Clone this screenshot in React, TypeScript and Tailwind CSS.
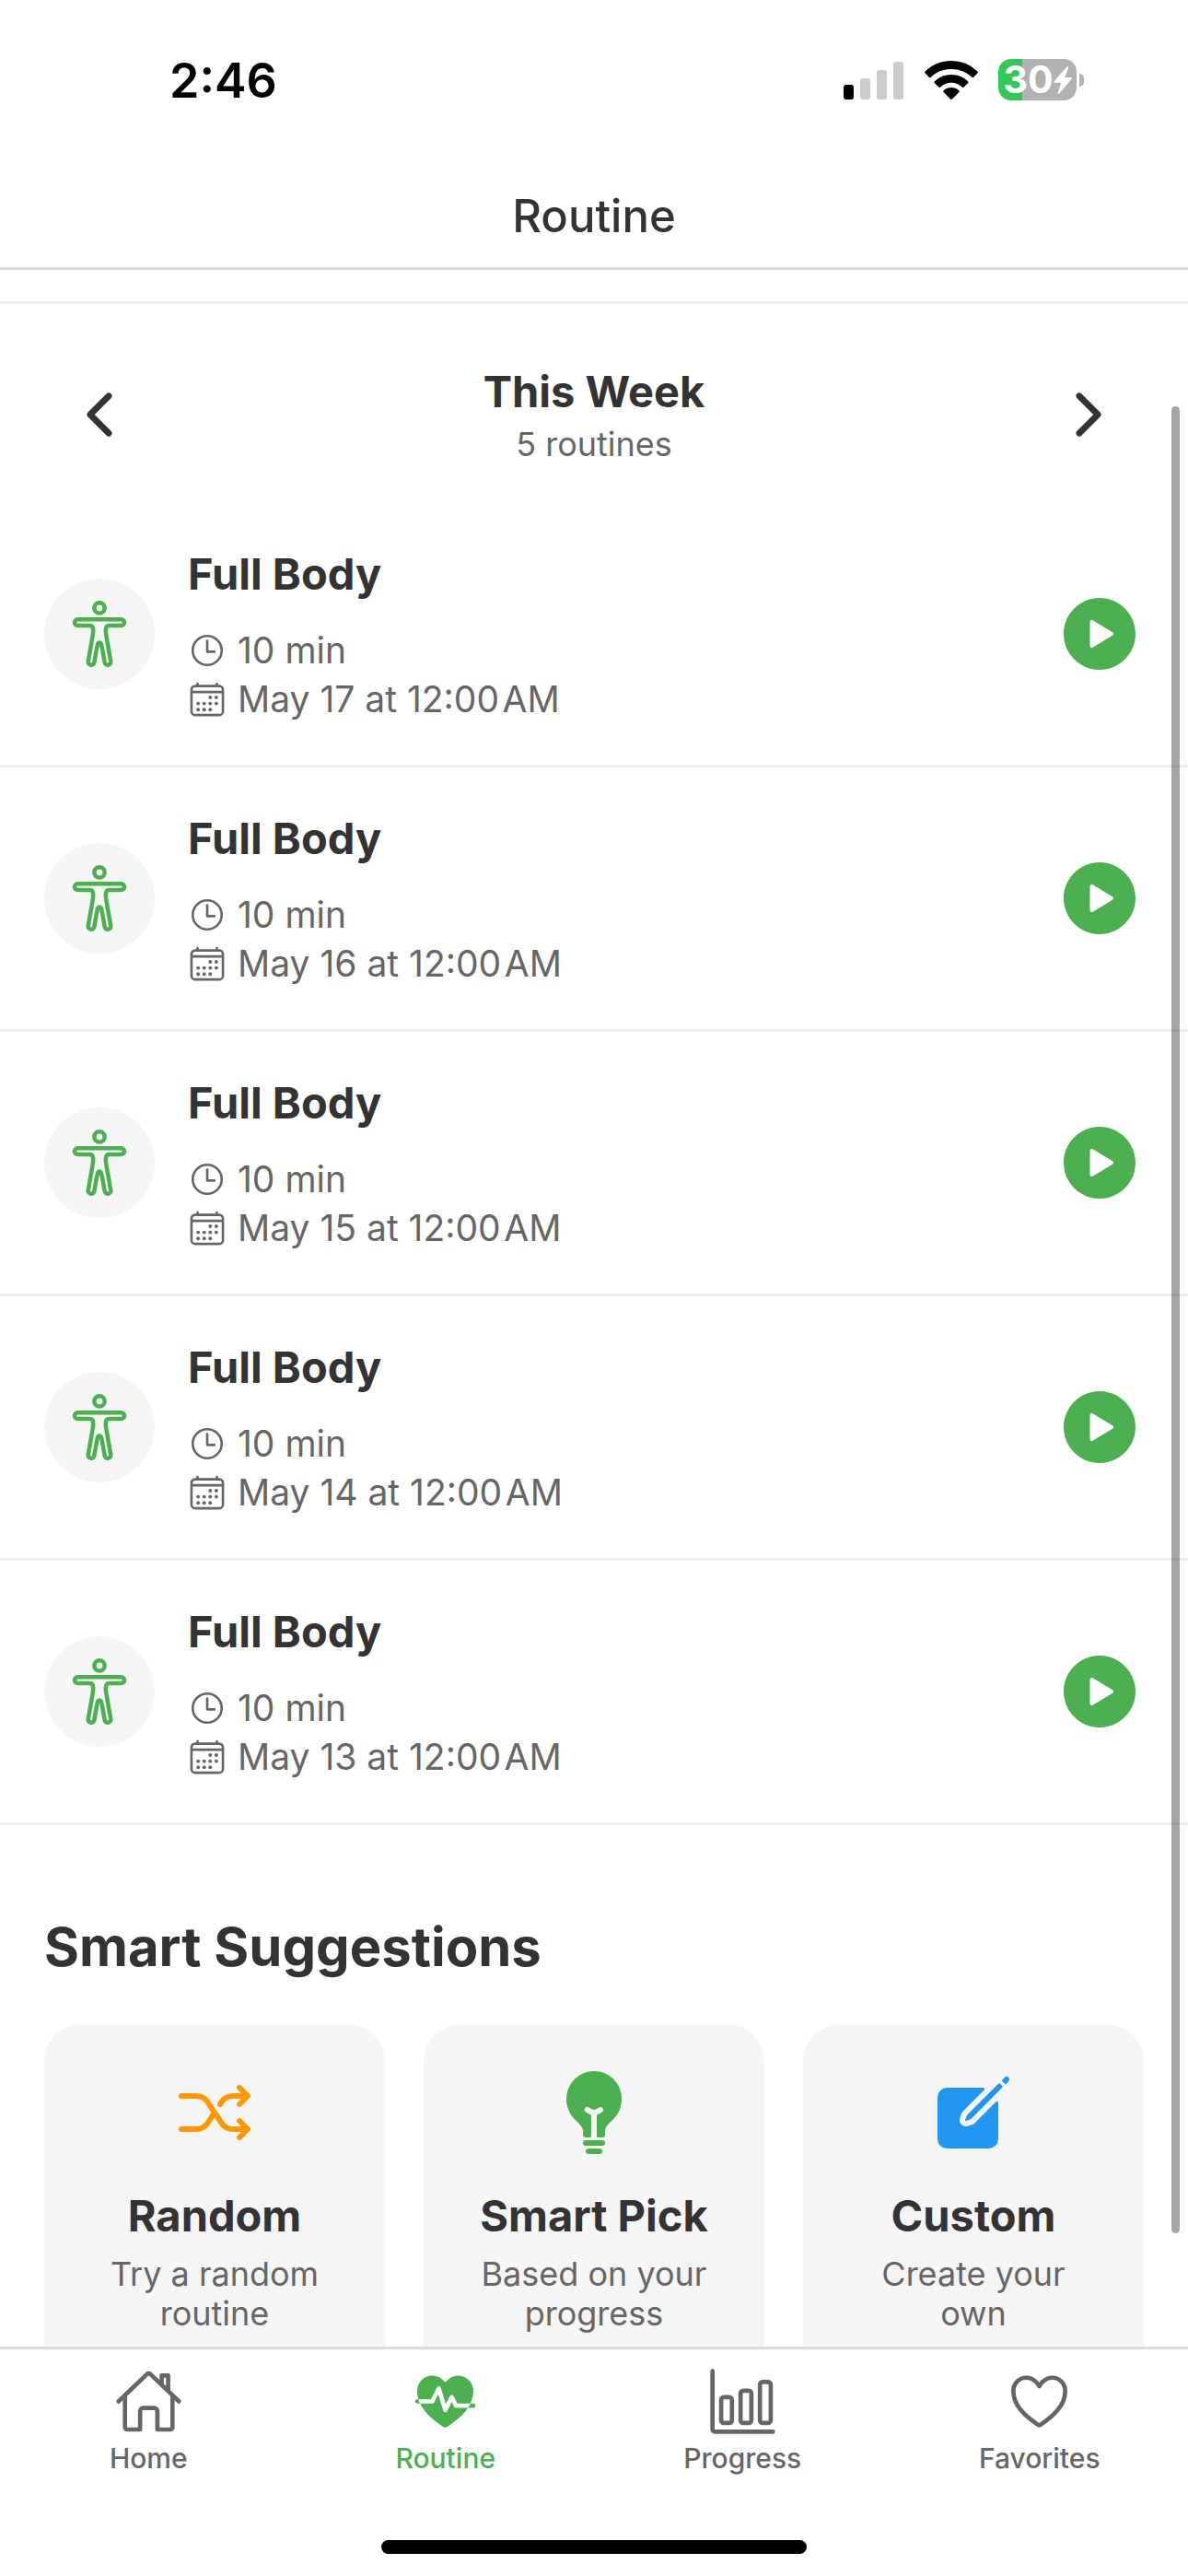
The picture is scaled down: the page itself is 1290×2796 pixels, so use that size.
import type { IconType } from 'react-icons'
import {
  IoBarChartOutline,
  IoBodyOutline,
  IoBulb,
  IoCalendarOutline,
  IoChevronBack,
  IoChevronForward,
  IoCreate,
  IoFitness,
  IoHeartOutline,
  IoHomeOutline,
  IoPlayCircle,
  IoShuffle,
  IoTimeOutline,
} from 'react-icons/io5'

const routines = [
  { id: 1, name: 'Full Body', duration: '10 min', date: 'May 17 at 12:00\u200aAM' },
  { id: 2, name: 'Full Body', duration: '10 min', date: 'May 16 at 12:00\u200aAM' },
  { id: 3, name: 'Full Body', duration: '10 min', date: 'May 15 at 12:00\u200aAM' },
  { id: 4, name: 'Full Body', duration: '10 min', date: 'May 14 at 12:00\u200aAM' },
  { id: 5, name: 'Full Body', duration: '10 min', date: 'May 13 at 12:00\u200aAM' },
]

const suggestions: { title: string; text: string; icon: IconType; color: string }[] = [
  { title: 'Random', text: 'Try a random routine', icon: IoShuffle, color: 'text-[#ff9800]' },
  { title: 'Smart Pick', text: 'Based on your progress', icon: IoBulb, color: 'text-[#4caf50]' },
  { title: 'Custom', text: 'Create your own', icon: IoCreate, color: 'text-[#2196f3]' },
]

const tabs: { label: string; icon: IconType; active?: boolean }[] = [
  { label: 'Home', icon: IoHomeOutline },
  { label: 'Routine', icon: IoFitness, active: true },
  { label: 'Progress', icon: IoBarChartOutline },
  { label: 'Favorites', icon: IoHeartOutline },
]

function StatusBar() {
  return (
    <div className="flex h-[177px] shrink-0 items-start justify-between pt-[54px] pr-[113px] pl-[184px]">
      <span className="text-[52px] leading-[68px] font-semibold text-black">2:46</span>
      <div className="flex items-center pt-[10px]">
        <svg width="66" height="42" viewBox="0 0 66 42" aria-label="Signal">
          <rect x="0" y="26" width="11" height="16" rx="3" fill="#000" />
          <rect x="18" y="19" width="11" height="23" rx="3" fill="#ccc" />
          <rect x="36" y="10" width="11" height="32" rx="3" fill="#ccc" />
          <rect x="54" y="1" width="11" height="41" rx="3" fill="#ccc" />
        </svg>
        <svg className="ml-[22px]" width="58" height="42" viewBox="0 0 58 42" aria-label="Wi-Fi">
          <path d="M29 0C18 0 8 4.300 .6 11.400a1.400 1.400 0 0 0 0 2l4.200 4.300a1.400 1.400 0 0 0 2 0A32 32 0 0 1 29 9a32 32 0 0 1 22.200 8.700 1.400 1.400 0 0 0 2 0l4.200-4.300a1.400 1.400 0 0 0 0-2A41 41 0 0 0 29 0Z" />
          <path d="M29 15a26 26 0 0 0-18 7.200 1.400 1.400 0 0 0 0 2l4.300 4.200a1.400 1.400 0 0 0 2 0 17 17 0 0 1 23.400 0 1.400 1.400 0 0 0 2 0l4.300-4.200a1.400 1.400 0 0 0 0-2A26 26 0 0 0 29 15Z" />
          <path d="M29 29a12 12 0 0 0-8.200 3.200 1.300 1.300 0 0 0 0 2l7.200 7.300a1.400 1.400 0 0 0 2 0l7.200-7.300a1.300 1.300 0 0 0 0-2A12 12 0 0 0 29 29Z" />
        </svg>
        <div className="ml-[22px] flex h-[45px] w-[85px] items-center justify-center rounded-[14px] bg-linear-to-r from-[#34c759] from-31% to-[#b2b2b2] to-31%">
          <span className="text-[41px] leading-[45px] font-bold text-white">30</span>
          <svg width="20" height="30" viewBox="0 0 20 30" fill="#fff" aria-label="Charging">
            <path d="M14.600.6 1 15.800c-.9 1-.4 2 .8 2h6.400L4.800 28.200c-.5 1.500.8 2.200 1.800 1L19.300 14c.9-1 .4-2-.8-2h-6.300l4-10.300C16.700.3 15.500-.4 14.600.6Z" />
          </svg>
        </div>
        <div className="ml-[3px] h-[14px] w-[5px] rounded-r-full bg-[#b2b2b2]" />
      </div>
    </div>
  )
}

function RoutineRow({ name, duration, date }: { name: string; duration: string; date: string }) {
  return (
    <li className="flex items-center border-b-[3px] border-[#eee] px-12 py-[45px]">
      <div className="flex size-[120px] items-center justify-center rounded-full bg-[#f5f5f5] text-[#4caf50]">
        <IoBodyOutline className="size-[72px]" />
      </div>
      <div className="ml-9 flex-1">
        <h3 className="mb-6 text-[47px] leading-[64px] font-bold text-[#333]">{name}</h3>
        <div className="flex items-center gap-3 text-[39px] leading-[53px] text-[#666]">
          <IoTimeOutline className="size-[42px]" />
          <span>{duration}</span>
        </div>
        <div className="flex items-center gap-3 text-[39px] leading-[53px] text-[#666]">
          <IoCalendarOutline className="size-[42px]" />
          <span>{date}</span>
        </div>
      </div>
      <button type="button" aria-label={`Start ${name}`} className="text-[#4caf50]">
        <IoPlayCircle className="size-24" />
      </button>
    </li>
  )
}

export default function App() {
  return (
    <div className="flex h-screen flex-col overflow-hidden bg-white font-['Inter',sans-serif]">
      <StatusBar />
      <header className="shrink-0 border-b-[3px] border-[#ddd] pt-[26px] pb-[23px] text-center">
        <h1 className="text-[49px] leading-[64px] font-medium text-[#333]">Routine</h1>
      </header>

      <main className="relative min-h-0 flex-1 overflow-hidden">
        <div className="mt-[34px] border-t-[3px] border-[#eee]" />
        <div className="flex items-center justify-between px-[72px] pt-[63px] pb-[39px]">
          <button type="button" aria-label="Previous week" className="text-[#333]">
            <IoChevronBack className="size-[72px]" />
          </button>
          <div className="text-center">
            <h2 className="text-[47px] leading-[64px] font-bold text-[#333]">This Week</h2>
            <p className="text-[36px] leading-[50px] text-[#666]">5 routines</p>
          </div>
          <button type="button" aria-label="Next week" className="text-[#333]">
            <IoChevronForward className="size-[72px]" />
          </button>
        </div>

        <ul>
          {routines.map((routine) => (
            <RoutineRow key={routine.id} name={routine.name} duration={routine.duration} date={routine.date} />
          ))}
        </ul>

        <section className="px-12 pt-[94px]">
          <h2 className="mb-[46px] text-[58px] leading-[76px] font-bold text-[#333]">Smart Suggestions</h2>
          <div className="grid grid-cols-3 gap-[42px]">
            {suggestions.map(({ title, text, icon: Icon, color }) => (
              <button
                key={title}
                type="button"
                className="flex flex-col items-center rounded-[40px] bg-[#f5f5f5] px-12 py-12"
              >
                <Icon className={`size-24 ${color}`} />
                <span className="mt-8 text-[47px] leading-[64px] font-bold text-[#333]">{title}</span>
                <span className="mt-[10px] text-[36px] leading-[43px] text-[#666]">{text}</span>
              </button>
            ))}
          </div>
        </section>

        <div className="absolute top-[148px] right-[9px] bottom-[123px] w-[9px] rounded-full bg-black/35" />
      </main>

      <nav className="shrink-0 border-t-[3px] border-[#ddd] pt-[19px] pb-6">
        <div className="grid grid-cols-4">
          {tabs.map(({ label, icon: Icon, active }) => (
            <a
              key={label}
              href="#"
              className={`flex flex-col items-center ${active ? 'text-[#4caf50]' : 'text-[#666]'}`}
            >
              <Icon className="size-[75px]" />
              <span className="mt-1 text-[30px] leading-[40px] font-medium">{label}</span>
            </a>
          ))}
        </div>
        <div className="mx-auto mt-[69px] h-[15px] w-[462px] rounded-full bg-black" />
      </nav>
    </div>
  )
}
